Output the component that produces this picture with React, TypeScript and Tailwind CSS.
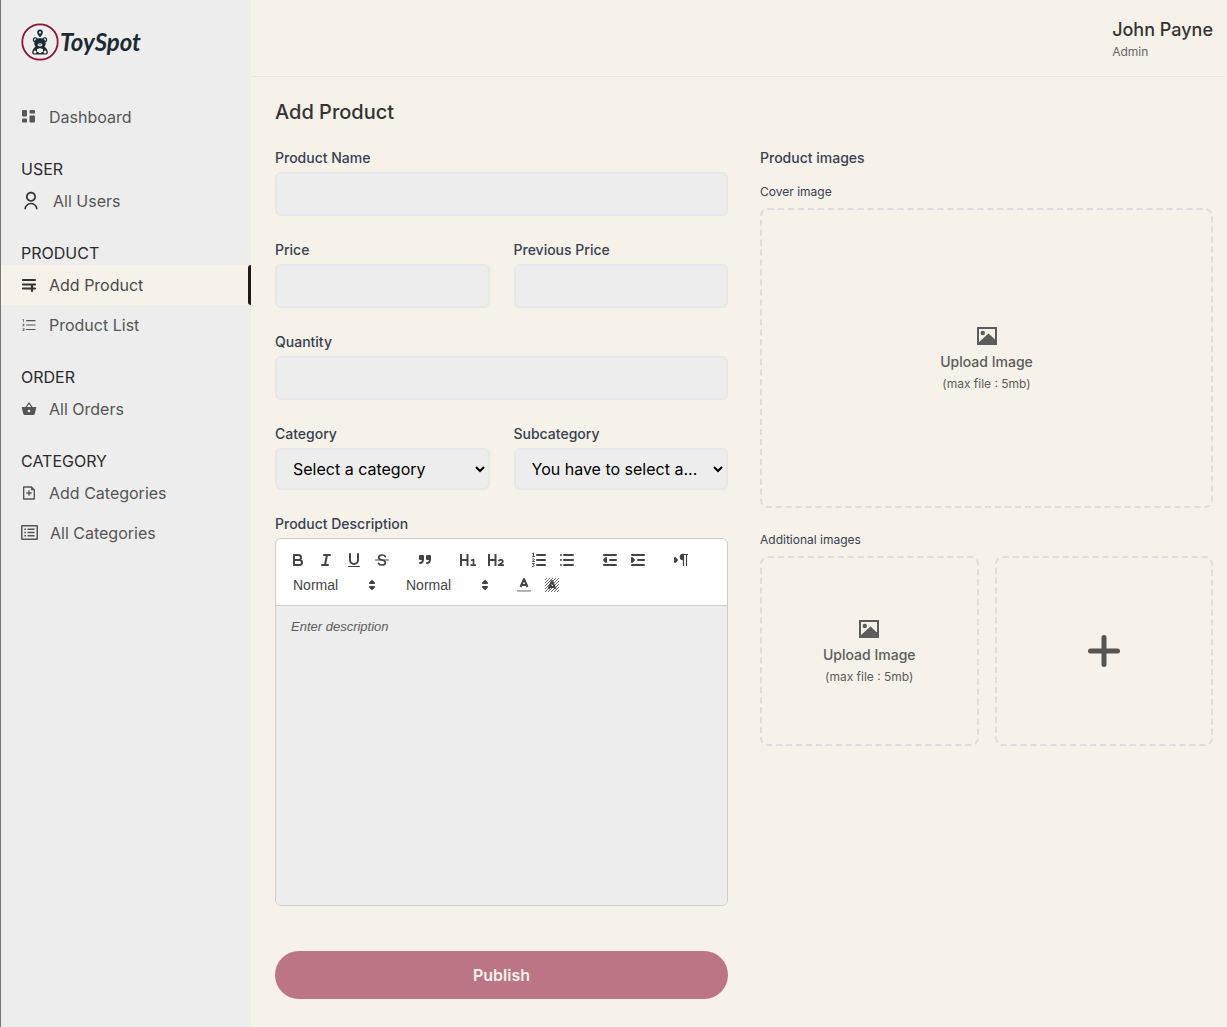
import type { ReactNode } from "react";
import { AiOutlineOrderedList } from "react-icons/ai";
import { MdShoppingBasket } from "react-icons/md";
import { RiFileAddLine, RiUserLine } from "react-icons/ri";

function DashboardIcon() {
  return (
    <svg viewBox="0 0 16 16" className="size-4" fill="currentColor">
      <rect x="1" y="1" width="5" height="6.5" rx="1" />
      <rect x="1" y="9.5" width="5" height="4" rx="1" />
      <rect x="8.5" y="1" width="5.5" height="3.5" rx="1" />
      <rect x="8.5" y="6.5" width="5.5" height="7" rx="1" />
    </svg>
  );
}

function ListAddIcon() {
  return (
    <svg viewBox="0 0 16 16" className="size-4" fill="none" stroke="#333333" strokeWidth="2.2" strokeLinecap="round">
      <path d="M2 3h12M2 7.5h12M2 11.500h12M11 9v5" />
    </svg>
  );
}

function ListBoxIcon() {
  return (
    <svg viewBox="0 0 17 16" className="h-4 w-[17px]" fill="none" stroke="currentColor">
      <rect x="0.75" y="0.75" width="15.5" height="13.5" rx="0.5" strokeWidth="1.5" />
      <path d="M6.500 4.200h7M6.500 7.500h7M6.500 10.800h7M3.300 4.200h1.600M3.300 7.500h1.600M3.300 10.800h1.600" strokeWidth="1.400" />
    </svg>
  );
}

function PictureIcon() {
  return (
    <svg viewBox="0 0 22 20" className="h-5 w-[22px]" fill="currentColor">
      <path fillRule="evenodd" d="M1.500 1h19a.5.5 0 0 1 .5.5v17a.5.5 0 0 1-.5.5h-19a.5.5 0 0 1-.5-.5v-17a.5.5 0 0 1 .5-.5ZM3 3v13l9.500-8.500 6.500 6V3Z" />
      <circle cx="6.800" cy="7" r="2.200" />
    </svg>
  );
}

function Logo() {
  return (
    <a href="#" aria-label="ToySpot" className="flex items-center gap-px text-[#1c2b33]">
      <svg viewBox="0 0 38 38" className="size-[38px] shrink-0" fill="none">
        <circle cx="19" cy="19" r="17.7" stroke="#8f1537" strokeWidth="1.8" />
        <path d="M19 14.200s-2.800-2.800-2.800-4.800a2.800 2.800 0 0 1 5.600 0c0 2-2.800 4.800-2.800 4.800Z" fill="currentColor" />
        <circle cx="19" cy="9.400" r="1.100" fill="#ededed" />
        <circle cx="14.300" cy="16.800" r="1.900" fill="#ededed" stroke="currentColor" strokeWidth="1.200" />
        <circle cx="23.700" cy="16.800" r="1.900" fill="#ededed" stroke="currentColor" strokeWidth="1.200" />
        <path d="M13.300 20.500c0-3.400 2.300-5.200 5.700-5.200s5.700 1.800 5.700 5.200c0 1.200-.4 2.400-1.200 3.300 1.900 1.200 3 3 3.300 5.200.3 1.500-.5 2.400-2 2.400H13.200c-1.500 0-2.300-.9-2-2.400.3-2.200 1.400-4 3.300-5.200a5 5 0 0 1-1.200-3.300Z" fill="currentColor" />
        <ellipse cx="19" cy="21.800" rx="2.400" ry="1.600" fill="#ededed" />
        <path d="m16 26.200 3-1.300 3 1.300v2.300l-3 1.700-3-1.700Z" fill="#ededed" />
        <circle cx="14" cy="29" r="1.500" fill="#ededed" />
        <circle cx="24" cy="29" r="1.500" fill="#ededed" />
        <path d="M19 20.800v1.500" stroke="currentColor" strokeWidth="1" />
      </svg>
      <span className="font-['Lato',sans-serif] text-2xl leading-[38px] font-bold italic">ToySpot</span>
    </a>
  );
}

function NavItem({ icon, label, active }: { icon: ReactNode; label: string; active?: boolean }) {
  return (
    <a
      href="#"
      aria-current={active ? "page" : undefined}
      className={
        active
          ? "relative flex h-10 items-center gap-3 bg-[#f6f1e9] pl-5 text-[#4b4b4b]"
          : "flex h-10 items-center gap-3 pl-5 text-[#555555]"
      }
    >
      {icon}
      <span>{label}</span>
      {active && <span className="absolute inset-y-0 right-0 w-[3px] rounded-l bg-[#1b1b1b]" />}
    </a>
  );
}

function NavGroup({ title, children }: { title: string; children: ReactNode }) {
  return (
    <section className="mt-5">
      <h2 className="pl-5 leading-6 text-[#2b2b2b]">{title}</h2>
      {children}
    </section>
  );
}

const labelClass = "text-sm font-medium text-[#374151]";

function TextField({ id, label }: { id: string; label: string }) {
  return (
    <div className="flex min-w-0 flex-col gap-1">
      <label htmlFor={id} className={labelClass}>{label}</label>
      <input id={id} type="text" className="h-11 w-full rounded-md border-2 border-gray-200 bg-[#ededed] px-3" />
    </div>
  );
}

function SelectField({ id, label, option }: { id: string; label: string; option: string }) {
  return (
    <div className="flex min-w-0 flex-col gap-1">
      <label htmlFor={id} className={labelClass}>{label}</label>
      <select id={id} className="h-[42px] w-full rounded-md border-2 border-gray-200 bg-[#ededed] pl-3 text-black">
        <option>{option}</option>
      </select>
    </div>
  );
}

function Tool({ label, children }: { label: string; children: ReactNode }) {
  return (
    <button type="button" aria-label={label} className="flex h-6 w-7 items-center justify-center">
      <svg viewBox="0 0 18 18" className="size-[18px]" fill="none" stroke="#444444" strokeWidth="2" strokeLinecap="round" strokeLinejoin="round">
        {children}
      </svg>
    </button>
  );
}

function Picker({ label }: { label: string }) {
  return (
    <div className="relative flex h-6 w-[98px] items-center">
      <select aria-label={label} className="w-full appearance-none bg-transparent pl-[9px] font-['Liberation_Sans',Arial,sans-serif] text-sm text-[#444444]">
        <option>Normal</option>
      </select>
      <svg viewBox="0 0 18 18" className="pointer-events-none absolute right-px size-[18px]" fill="#444444" stroke="#444444" strokeWidth="2" strokeLinejoin="round">
        <polygon points="7 11 9 13 11 11 7 11" />
        <polygon points="7 7 9 5 11 7 7 7" />
      </svg>
    </div>
  );
}

const hatch = Array.from({ length: 9 }, (_, i) => i * 3 - 12);

function Toolbar() {
  return (
    <div role="toolbar" aria-label="Formatting" className="flex flex-col gap-px border-b border-[#cccccc] p-2">
      <div className="flex h-[25px] items-center gap-[15px]">
        <div className="flex">
          <Tool label="Bold">
            <path d="M5 4h4.500a2.500 2.500 0 0 1 0 5H5ZM5 9h5.500a2.500 2.500 0 0 1 0 5H5Z" />
          </Tool>
          <Tool label="Italic">
            <path d="M7 4h6M5 14h6M8 14l2-10" />
          </Tool>
          <Tool label="Underline">
            <path d="M5 3v6a4 4 0 0 0 8 0V3" />
            <rect x="3" y="15" width="12" height="1" rx=".5" fill="#444444" stroke="none" />
          </Tool>
          <Tool label="Strike">
            <path d="M15.500 9h-13" strokeWidth="1" />
            <path d="M12.300 5.500C11.700 4.300 10.500 4 9 4 7 4 5.700 5 5.700 6.500c0 1.300 1 2 3.300 2.500 2.400.5 3.400 1.200 3.400 2.500 0 1.600-1.400 2.500-3.400 2.500-1.700 0-3-.5-3.500-1.700" strokeWidth="1.700" />
          </Tool>
        </div>
        <Tool label="Blockquote">
          <rect x="4" y="5" width="3" height="3" fill="#444444" />
          <rect x="11" y="5" width="3" height="3" fill="#444444" />
          <path d="M7 8c0 4-2 4-3 4M14 8c0 4-2 4-3 4" />
        </Tool>
        <div className="flex">
          <Tool label="Heading 1">
            <path d="M8.500 9H2M8.500 3v12M2 3v12" strokeLinecap="butt" />
            <path d="M14.500 14V8.500l-2.500 1M11.500 14.200h5.500" strokeWidth="1.700" strokeLinecap="butt" />
          </Tool>
          <Tool label="Heading 2">
            <path d="M8.500 9H2M8.500 3v12M2 3v12" strokeLinecap="butt" />
            <path d="M11.500 10.200c.6-1.900 4.500-1.600 4.300.6-.2 1.300-2.900 2-4.200 3.400h5.400" strokeWidth="1.700" strokeLinecap="butt" />
          </Tool>
        </div>
        <div className="flex">
          <Tool label="Ordered list">
            <path d="M7 4h8M7 9h8M7 14h8" />
            <path d="M2.500 2.500l1-.5v3.500M2.500 5.500h2M2.500 8c.8-.7 2-.4 1.800.4L2.500 10.500h2M2.500 12.500h1.800l-1 1.300c1.400 0 1.400 2-.8 1.700" strokeWidth="1" />
          </Tool>
          <Tool label="Bullet list">
            <path d="M6 4h9M6 9h9M6 14h9M3 4h0M3 9h0M3 14h0" />
          </Tool>
        </div>
        <div className="flex">
          <Tool label="Decrease indent">
            <path d="M3 14h12M3 4h12M9 9h6" />
            <polygon points="5 7 5 11 3 9 5 7" fill="#444444" />
          </Tool>
          <Tool label="Increase indent">
            <path d="M3 14h12M3 4h12M9 9h6" />
            <polygon points="3 7 3 11 5 9 3 7" fill="#444444" />
          </Tool>
        </div>
        <Tool label="Text direction">
          <polygon points="3 11 5 9 3 7 3 11" fill="#444444" />
          <path d="M16 3.500h-5M11.500 3v12M14.500 3v12" strokeWidth="1.200" strokeLinecap="butt" />
          <path d="M11 9a3 3 0 0 1 0-6Z" fill="#444444" strokeWidth="1" />
        </Tool>
      </div>
      <div className="flex h-6 items-center gap-[15px]">
        <Picker label="Text size" />
        <Picker label="Font" />
        <div className="flex">
          <Tool label="Text color">
            <path d="M2 15h14" strokeOpacity=".4" strokeLinecap="butt" />
            <path d="M5.500 11 9 3l3.500 8M11.600 9H6.400" strokeLinecap="butt" />
          </Tool>
          <Tool label="Background color">
            <svg x="2" y="2" width="14" height="14" viewBox="0 0 14 14">
              {hatch.map((x) => (
                <path key={x} d={`M${x} 14 L${x + 14} 0`} strokeWidth="0.800" />
              ))}
            </svg>
            <path d="M5.500 13 9 5l3.500 8M11.600 11H6.400" strokeLinecap="butt" />
          </Tool>
        </div>
      </div>
    </div>
  );
}

function UploadBox({ id, className }: { id: string; className: string }) {
  return (
    <label htmlFor={id} className={`flex flex-col items-center justify-center rounded-lg border-2 border-dashed border-[#dddddd] pt-[2px] text-[#5c5c5c] ${className}`}>
      <PictureIcon />
      <span className="mt-[6px] text-sm font-medium">Upload Image</span>
      <span className="mt-1 text-xs">(max file : 5mb)</span>
      <input id={id} type="file" className="sr-only" />
    </label>
  );
}

export default function App() {
  return (
    <div className="flex min-h-screen border-l border-[#777777] bg-[#f6f1e9] font-['Inter',sans-serif] text-base">
      <aside className="w-[250px] shrink-0 bg-[#ededed]">
        <div className="px-5 pt-[23px] pb-9">
          <Logo />
        </div>
        <nav>
          <NavItem icon={<DashboardIcon />} label="Dashboard" />
          <NavGroup title="USER">
            <NavItem icon={<RiUserLine className="size-5 text-[#333333]" />} label="All Users" />
          </NavGroup>
          <NavGroup title="PRODUCT">
            <NavItem icon={<ListAddIcon />} label="Add Product" active />
            <NavItem icon={<AiOutlineOrderedList className="size-4" />} label="Product List" />
          </NavGroup>
          <NavGroup title="ORDER">
            <NavItem icon={<MdShoppingBasket className="size-4" />} label="All Orders" />
          </NavGroup>
          <NavGroup title="CATEGORY">
            <NavItem icon={<RiFileAddLine className="size-4" />} label="Add Categories" />
            <NavItem icon={<ListBoxIcon />} label="All Categories" />
          </NavGroup>
        </nav>
      </aside>

      <div className="flex min-w-0 flex-1 flex-col">
        <header className="flex justify-end border-b border-[#ebe6df] px-[14px] py-4">
          <div>
            <p className="text-lg leading-7 font-medium text-[#333333]">John Payne</p>
            <p className="text-xs text-[#666666]">Admin</p>
          </div>
        </header>

        <main className="pt-[21px] pr-[14px] pb-7 pl-6">
          <h1 className="text-xl leading-7 font-medium text-[#333333]">Add Product</h1>
          <form className="mt-[22px] grid grid-cols-2 gap-8">
            <div className="flex min-w-0 flex-col gap-6">
              <TextField id="name" label="Product Name" />
              <div className="grid grid-cols-2 gap-6">
                <TextField id="price" label="Price" />
                <TextField id="previous-price" label="Previous Price" />
              </div>
              <TextField id="quantity" label="Quantity" />
              <div className="grid grid-cols-2 gap-6">
                <SelectField id="category" label="Category" option="Select a category" />
                <SelectField id="subcategory" label="Subcategory" option="You have to select a..." />
              </div>
              <div className="flex flex-col gap-1">
                <label htmlFor="description" className={labelClass}>Product Description</label>
                <div className="flex flex-col overflow-hidden rounded-md border border-[#cccccc] bg-white">
                  <Toolbar />
                  <textarea
                    id="description"
                    placeholder="Enter description"
                    className="h-[299px] resize-none bg-[#ededed] px-[15px] py-3 font-['Liberation_Sans',Arial,sans-serif] text-[13px] leading-[18px] placeholder:text-[#5c5c5c] placeholder:italic"
                  />
                </div>
              </div>
              <button type="submit" className="mt-[21px] h-12 rounded-full bg-[#bc7585] font-semibold text-[#f6f1e9]">
                Publish
              </button>
            </div>

            <div className="flex min-w-0 flex-col">
              <h2 className={labelClass}>Product images</h2>
              <h3 className="mt-4 mb-2 text-xs text-[#374151]">Cover image</h3>
              <UploadBox id="cover-image" className="h-[300px]" />
              <h3 className="mt-6 mb-2 text-xs text-[#374151]">Additional images</h3>
              <div className="grid grid-cols-2 gap-4">
                <UploadBox id="additional-image" className="h-[190px]" />
                <button type="button" aria-label="Add another image" className="flex h-[190px] items-center justify-center rounded-lg border-2 border-dashed border-[#dddddd] text-[#555555]">
                  <svg viewBox="0 0 34 34" className="size-[34px]" fill="none" stroke="currentColor" strokeWidth="5" strokeLinecap="round">
                    <path d="M3.500 17h27M17 3.500v27" />
                  </svg>
                </button>
              </div>
            </div>
          </form>
        </main>
      </div>
    </div>
  );
}
